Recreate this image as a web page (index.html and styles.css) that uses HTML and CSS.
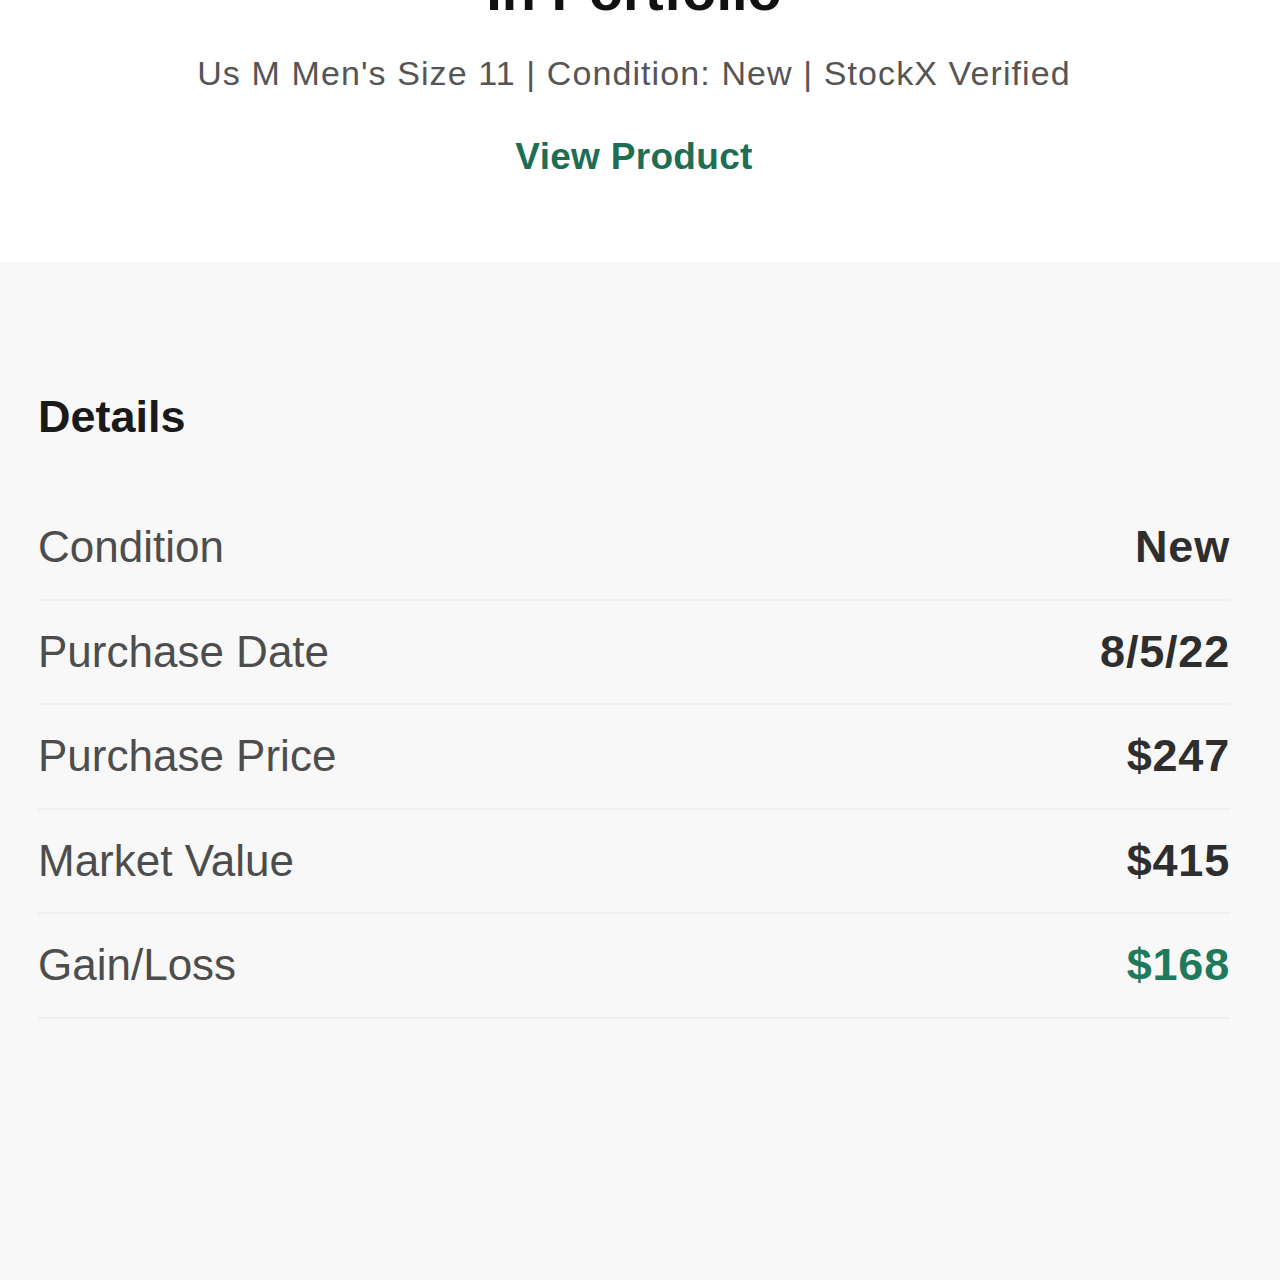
FILE: index.html
```html
<!DOCTYPE html>
<html lang="en">
<head>
    <meta charset="UTF-8" />
    <meta name="viewport" content="width=device-width, initial-scale=1" />
    <title>In Portfolio | Item Details</title>
    <link rel="stylesheet" href="styles.css">
</head>
<body>

    <div class="summary">
        <h1>In Portfolio</h1>
        <p class="meta">Us M Men's Size 11 | Condition: New | StockX Verified</p>
        <a class="view-link" href="#">View Product</a>
    </div>

    <div class="details">
        <h2>Details</h2>

        <div class="row">
            <span class="label">Condition</span>
            <span class="value">New</span>
        </div>
        <div class="row">
            <span class="label">Purchase Date</span>
            <span class="value">8/5/22</span>
        </div>
        <div class="row">
            <span class="label">Purchase Price</span>
            <span class="value">$247</span>
        </div>
        <div class="row">
            <span class="label">Market Value</span>
            <span class="value">$415</span>
        </div>
        <div class="row">
            <span class="label">Gain/Loss</span>
            <span class="value gain">$168</span>
        </div>
    </div>

</body>
</html>
```

FILE: styles.css
```css
html, body { margin: 0; padding: 0; background: #f8f8f8; }
body { font-family: "Liberation Sans", Arial, sans-serif; color: #222; min-height: 1280px; }

.summary { background: #fff; height: 262px; padding-right: 12px; text-align: center; overflow: hidden; }
.summary h1 { margin: -37px 0 0; font-size: 56px; line-height: 56px; font-weight: bold; color: #111; }
.meta { margin: 34px 0 0; font-size: 34px; line-height: 40px; letter-spacing: 1.1px; color: #555; }
.view-link { display: inline-block; margin-top: 44px; font-size: 37px; line-height: 40px; font-weight: bold; letter-spacing: 0.3px; color: #1d6e53; text-decoration: none; }

.details { padding: 129px 50px 0 38px; }
.details h2 { margin: 0 0 53px; font-size: 45px; line-height: 52px; font-weight: bold; color: #1a1a1a; }

.row { display: flex; justify-content: space-between; align-items: center; padding: 25px 0 25.5px; border-bottom: 2px solid #efefef; font-size: 44px; line-height: 52px; }
.label { color: #4d4d4d; }
.value { font-size: 45px; font-weight: bold; letter-spacing: 0.8px; color: #2e2e2e; }
.value.gain { color: #1f7a5b; }
```
